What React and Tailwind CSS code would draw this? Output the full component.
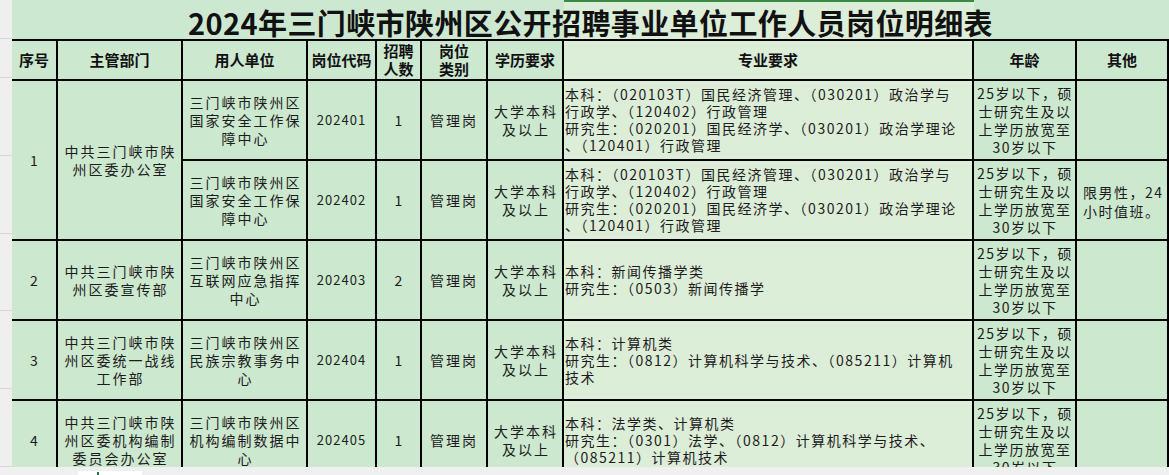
import React from "react";

const FONT = "font-['Noto_Sans_CJK_SC','Noto_Sans',sans-serif]";
const GREEN = "bg-[#cce8cf]";
const LIGHT = "bg-[#dcedd8]";

const AGE = ["25岁以下，硕", "士研究生及以", "上学历放宽至", "30岁以下"];
const MAJOR1 = [
  "本科：（020103T）国民经济管理、（030201）政治学与",
  "行政学、（120402）行政管理",
  "研究生：（020201）国民经济学、（030201）政治学理论",
  "、（120401）行政管理",
];

const HEADERS = [
  ["序号"],
  ["主管部门"],
  ["用人单位"],
  ["岗位代码"],
  ["招聘", "人数"],
  ["岗位", "类别"],
  ["学历要求"],
  ["专业要求"],
  ["年龄"],
  ["其他"],
];

const ROWS = [
  {
    seq: "1",
    dept: ["中共三门峡市陕", "州区委办公室"],
    span: true,
    unit: ["三门峡市陕州区", "国家安全工作保", "障中心"],
    code: "202401",
    num: "1",
    major: MAJOR1,
    other: null,
  },
  {
    unit: ["三门峡市陕州区", "国家安全工作保", "障中心"],
    code: "202402",
    num: "1",
    major: MAJOR1,
    other: ["限男性，24", "小时值班。"],
  },
  {
    seq: "2",
    dept: ["中共三门峡市陕", "州区委宣传部"],
    unit: ["三门峡市陕州区", "互联网应急指挥", "中心"],
    code: "202403",
    num: "2",
    major: ["本科：新闻传播学类", "研究生：（0503）新闻传播学"],
    other: null,
  },
  {
    seq: "3",
    dept: ["中共三门峡市陕", "州区委统一战线", "工作部"],
    unit: ["三门峡市陕州区", "民族宗教事务中", "心"],
    code: "202404",
    num: "1",
    major: [
      "本科：计算机类",
      "研究生：（0812）计算机科学与技术、（085211）计算机",
      "技术",
    ],
    other: null,
  },
  {
    seq: "4",
    dept: ["中共三门峡市陕", "州区委机构编制", "委员会办公室"],
    unit: ["三门峡市陕州区", "机构编制数据中", "心"],
    code: "202405",
    num: "1",
    major: [
      "本科：法学类、计算机类",
      "研究生：（0301）法学、（0812）计算机科学与技术、",
      "（085211）计算机技术",
    ],
    other: null,
  },
];

function Lines({ lines, className = "" }) {
  return (
    <div className={className}>
      {lines.map((l, i) => (
        <div key={i} className="whitespace-nowrap">
          {l}
        </div>
      ))}
    </div>
  );
}

function Cell({ children, className = "", light = false }) {
  return (
    <div
      className={`${light ? LIGHT : GREEN} flex items-center justify-center text-center overflow-hidden ${className}`}
    >
      {children}
    </div>
  );
}

const BODY = "text-[14px] leading-[18px] tracking-[2px] text-[#1c1c1c]";

export default function App() {
  return (
    <div className={`w-[1169px] h-[475px] flex flex-col overflow-hidden bg-[#f0f0f0] ${FONT}`}>
      <div className="flex flex-1 overflow-hidden">
        {/* row header strip */}
        <div className="w-[12px] shrink-0 flex flex-col bg-[#efefef]">
          <div className="h-[40px] border-b border-[#d6d6d6]" />
          <div className="h-[40px] border-b border-[#d6d6d6]" />
          <div className="h-[80px] border-b border-[#d6d6d6]" />
          <div className="h-[80px] border-b border-[#d6d6d6]" />
          <div className="h-[80px] border-b border-[#d6d6d6]" />
          <div className="h-[80px] border-b border-[#d6d6d6]" />
          <div className="h-[80px] border-b border-[#d6d6d6]" />
        </div>

        {/* sheet */}
        <div className="flex-1 flex flex-col">
          <div className="relative h-[39px] shrink-0 flex">
            <div className="w-[552px] bg-[#cde8d0]" />
            <div className="w-[410px] bg-[#dcedd8]" />
            <div className="flex-1 bg-[#cde8d0]" />
            <div className="absolute left-[552px] top-0 w-[410px] h-[2px] bg-[#3a8a45]" />
            <div className="absolute inset-0 flex items-center justify-center pt-[5px]">
              <span className="text-[29px] font-bold text-[#111] tracking-[0.4px] leading-none">
                2024年三门峡市陕州区公开招聘事业单位工作人员岗位明细表
              </span>
            </div>
          </div>

          <div className="grid grid-cols-[44px_123px_123px_67px_43px_64px_74px_408px_101px_90px] grid-rows-[38px_78px_78px_78px_78px_78px] gap-[2px] pt-[2px] pr-[2px] bg-black">
            {HEADERS.map((h, i) => (
              <Cell key={i} light={i === 7}>
                <Lines
                  lines={h}
                  className="text-[15px] leading-[18px] font-bold text-[#111]"
                />
              </Cell>
            ))}

            {ROWS.map((r, ri) => (
              <React.Fragment key={ri}>
                {r.seq && (
                  <Cell className={r.span ? "row-span-2" : ""}>
                    <span className="text-[14px] text-[#1c1c1c]">{r.seq}</span>
                  </Cell>
                )}
                {r.dept && (
                  <Cell className={r.span ? "row-span-2" : ""}>
                    <Lines lines={r.dept} className={`${BODY} pl-[2px]`} />
                  </Cell>
                )}
                <Cell>
                  <Lines lines={r.unit} className={`${BODY} pl-[2px]`} />
                </Cell>
                <Cell>
                  <span className="text-[13px] tracking-[1px] text-[#1c1c1c]">{r.code}</span>
                </Cell>
                <Cell>
                  <span className="text-[14px] text-[#1c1c1c]">{r.num}</span>
                </Cell>
                <Cell>
                  <span className={BODY}>管理岗</span>
                </Cell>
                <Cell>
                  <Lines lines={["大学本科", "及以上"]} className={`${BODY} pl-[2px]`} />
                </Cell>
                <Cell light className="!justify-start !text-left pl-[1px]">
                  <Lines
                    lines={r.major}
                    className="text-[14px] leading-[17px] tracking-[1.5px] text-[#1c1c1c]"
                  />
                </Cell>
                <Cell>
                  <Lines
                    lines={AGE}
                    className="text-[14px] leading-[18px] tracking-[1.5px] text-[#1c1c1c] pl-[1px]"
                  />
                </Cell>
                <Cell className="!justify-start !text-left pl-[6px] pt-[4px]">
                  {r.other && (
                    <Lines
                      lines={r.other}
                      className="text-[14px] leading-[19px] tracking-[1.5px] text-[#1c1c1c]"
                    />
                  )}
                </Cell>
              </React.Fragment>
            ))}
          </div>
        </div>
      </div>

      {/* bottom sheet tab strip */}
      <div className="h-[8px] shrink-0 bg-[#f0f0f0] flex items-end">
        <div className="ml-[78px] w-[64px] h-[4px] bg-white flex">
          <div className="ml-[19px] w-[2px] h-[3px] mt-[1px] bg-[#217346]" />
        </div>
      </div>
    </div>
  );
}
